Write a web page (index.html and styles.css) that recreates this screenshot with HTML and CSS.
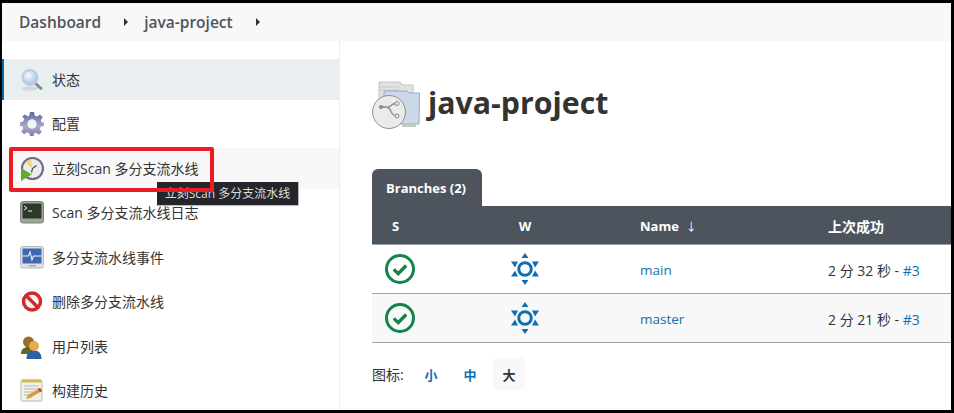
FILE: index.html
```html
<!DOCTYPE html>
<html lang="zh-CN">
<head>
<meta charset="utf-8">
<title>java-project</title>
<link rel="stylesheet" href="styles.css">
</head>
<body>
<svg class="sprite" width="0" height="0">
  <defs>
    <symbol id="ok" viewBox="0 0 30 30">
      <circle cx="15" cy="15" r="13.500" fill="none" stroke="#138347" stroke-width="3"/>
      <path d="M8.800 15.400l4.400 4.300 8-8.200" fill="none" stroke="#138347" stroke-width="3.400"/>
    </symbol>
    <symbol id="sun" viewBox="0 0 28 32">
      <circle cx="14" cy="16" r="6.300" fill="none" stroke="#0f6fae" stroke-width="3"/>
      <path fill="#0f6fae" d="M14 0l3.500 5h-7zM14 32l-3.500-5h7zM0 8.500h7l-3 6zM28 8.500h-7l3 6zM4 17.500l3 6H0zM24 17.500l4 6h-7z"/>
    </symbol>
  </defs>
</svg>
<div class="frame">
  <nav class="crumbs">
    <a class="crumb">Dashboard</a><span class="caret"></span>
    <a class="crumb">java-project</a><span class="caret"></span>
  </nav>
  <div class="layout">
    <aside class="side">
      <a class="item active">
        <svg class="ico" viewBox="0 0 24 24">
          <defs><radialGradient id="lens" cx=".4" cy=".35" r=".8"><stop offset="0" stop-color="#f6fafe"/><stop offset="1" stop-color="#8db6e4"/></radialGradient></defs>
          <ellipse cx="10" cy="20.500" rx="8.500" ry="2" fill="#d3d7d9"/>
          <path d="M14.500 14.500l6.500 6" stroke="#85898c" stroke-width="3" stroke-linecap="round"/>
          <circle cx="10" cy="9.500" r="7.500" fill="url(#lens)" stroke="#c3cacf" stroke-width="1.800"/>
        </svg>
        <span>状态</span>
      </a>
      <a class="item">
        <svg class="ico" viewBox="0 0 24 24">
          <defs><linearGradient id="gear" x1="0" y1="0" x2="0" y2="1"><stop offset="0" stop-color="#59699a"/><stop offset=".6" stop-color="#a8a9cc"/><stop offset="1" stop-color="#7c7fa4"/></linearGradient></defs>
          <path fill="url(#gear)" fill-rule="evenodd" d="M10 0h4l.7 3.500 2.300 1 3-2 2.800 2.800-2 3 1 2.300L24 10.500v3.500l-3.200.7-1 2.300 2 3-2.800 2.800-3-2-2.300 1L14 24h-4l-.7-2.700-2.300-1-3 2-2.800-2.800 2-3-1-2.300L0 14v-3.500l3.200-.9 1-2.300-2-3L5 2.500l3 2 1.300-1zM12 7.500a4.500 4.500 0 1 0 0 9 4.500 4.500 0 0 0 0-9z"/>
          <circle cx="12" cy="12" r="4.500" fill="#f4f4f6"/>
        </svg>
        <span>配置</span>
      </a>
      <a class="item hover">
        <svg class="ico" viewBox="0 0 24 24">
          <circle cx="12.500" cy="11.500" r="10.500" fill="#eeecea" stroke="#726a8a" stroke-width="2.200"/>
          <path d="M12.500 11.500L11 2.500a9 9 0 0 0-6 3z" fill="#ecd987"/>
          <path d="M12.500 11.500l4-3M12.500 11.500l-1 4" stroke="#4b4b4b" stroke-width="1.200"/>
          <path d="M1 11l11 6.500L1 24z" fill="#63ab2c"/>
        </svg>
        <span>立刻Scan 多分支流水线</span>
      </a>
      <a class="item">
        <svg class="ico" viewBox="0 0 24 24">
          <rect x="0.500" y="0.500" width="23" height="21.500" rx="2.500" fill="#9fa39e" stroke="#7d817c"/>
          <rect x="2.500" y="2.500" width="19" height="15" fill="#2b3a28"/>
          <path d="M4 5l3 2-3 2M8 10h4" fill="none" stroke="#e8efe6" stroke-width="1"/>
          <rect x="15" y="19.500" width="2" height="1.500" fill="#8fd14f"/>
        </svg>
        <span>Scan 多分支流水线日志</span>
      </a>
      <a class="item">
        <svg class="ico" viewBox="0 0 24 24">
          <rect x="0.500" y="0.500" width="23" height="21.500" rx="2.500" fill="#dfe2e3" stroke="#b5b9bb"/>
          <rect x="2.500" y="2.500" width="19" height="15" fill="#3c69b3"/>
          <path d="M2.500 10h6l1.500-4 2 8 1.500-4h8" fill="none" stroke="#eef5fb" stroke-width="1.100"/>
          <rect x="9" y="19" width="7" height="1.500" fill="#a5a9ab"/>
        </svg>
        <span>多分支流水线事件</span>
      </a>
      <a class="item">
        <svg class="ico" viewBox="0 0 24 24">
          <circle cx="12" cy="11.500" r="8.500" fill="#f4f1f0" stroke="#cf2a2a" stroke-width="3.400"/>
          <path d="M5.500 5l13 13" stroke="#cf2a2a" stroke-width="3.400"/>
        </svg>
        <span>删除多分支流水线</span>
      </a>
      <a class="item">
        <svg class="ico" viewBox="0 0 24 24">
          <circle cx="8.500" cy="7" r="5.500" fill="#96702a"/>
          <path d="M1 19c0-5 3-7 7.500-7s7 2 7 7z" fill="#5f6a25"/>
          <path d="M6.500 24c0-6 3-8.500 7.500-8.500s7.500 2.500 7.500 8.500z" fill="#2b62a3"/>
          <circle cx="14" cy="11" r="5" fill="#eca94b"/>
        </svg>
        <span>用户列表</span>
      </a>
      <a class="item">
        <svg class="ico" viewBox="0 0 24 24">
          <rect x="1" y="1" width="21" height="21" rx="1" fill="#f2f1ea" stroke="#b9b9ae"/>
          <rect x="2" y="0.500" width="19" height="3" fill="#cdbb55"/>
          <path d="M4 7h15M4 10h15M4 13h10M4 16h6" stroke="#b5b7b5"/>
          <path d="M6 20l2-4 12-7 2 3-12 7z" fill="#d99a3a"/>
          <path d="M18 10l2-1 2 3-2 1z" fill="#c0392b"/>
        </svg>
        <span>构建历史</span>
      </a>
    </aside>
    <main class="main">
      <header class="head">
        <svg class="head-ico" viewBox="0 0 48 48">
          <path d="M7 1h21l2 3h11v38H7z" fill="#e2e2e2" stroke="#c4c4c4"/>
          <path d="M7 6h20M7 9h20" stroke="#c9c9c9"/>
          <path d="M12 10h23l2 2h10.500l-.5 31H12z" fill="#cbd8e8" stroke="#92abc9"/>
          <path d="M30 44.500h14" stroke="#c5c8c5" stroke-width="3"/>
          <circle cx="17" cy="31" r="16.500" fill="#ebebeb" stroke="#8f8f8f"/>
          <path d="M9 26h5c4 0 4 3 5.500 5.500S22 35 25 35M16 26c3 0 3-3.500 8-3.500" fill="none" stroke="#8a8a8a" stroke-width="1.300"/>
          <circle cx="9" cy="26" r="2" fill="#8a8a8a"/>
          <circle cx="25" cy="22.500" r="2" fill="#ebebeb" stroke="#8a8a8a"/>
          <circle cx="25" cy="35" r="2" fill="#ebebeb" stroke="#8a8a8a"/>
        </svg>
        <h1 class="title">java-project</h1>
      </header>
      <div class="tabs"><span class="tab">Branches (2)</span></div>
      <table class="grid">
        <colgroup><col class="c-s"><col class="c-w"><col class="c-n"><col class="c-l"></colgroup>
        <thead>
          <tr><th class="th-s">S</th><th class="th-w">W</th><th>Name&nbsp; <span class="arrow">↓</span></th><th class="th-l">上次成功</th></tr>
        </thead>
        <tbody>
          <tr>
            <td class="td-s"><svg class="stat"><use href="#ok"/></svg></td>
            <td class="td-w"><svg class="wea"><use href="#sun"/></svg></td>
            <td><a class="link">main</a></td>
            <td>2 分 32 秒 - <a class="link build">#3</a></td>
          </tr>
          <tr class="alt">
            <td class="td-s"><svg class="stat"><use href="#ok"/></svg></td>
            <td class="td-w"><svg class="wea"><use href="#sun"/></svg></td>
            <td><a class="link">master</a></td>
            <td>2 分 21 秒 - <a class="link build">#3</a></td>
          </tr>
        </tbody>
      </table>
      <div class="legend">
        <span class="legend-label">图标:</span>
        <a class="size">小</a><a class="size">中</a><a class="size current">大</a>
      </div>
    </main>
  </div>
  <div class="tooltip">立刻Scan 多分支流水线</div>
  <div class="mark"></div>
</div>
</body>
</html>
```
FILE: styles.css
```css
* { box-sizing: border-box; }
html, body { margin: 0; padding: 0; }
body {
  width: 954px;
  height: 413px;
  overflow: hidden;
  font-family: "Open Sans", "Noto Sans CJK SC", sans-serif;
  font-size: 14px;
  color: #333;
  background: #fff;
}
.sprite { position: absolute; }
.frame {
  position: relative;
  width: 954px;
  height: 413px;
  overflow: hidden;
  border-style: solid;
  border-color: #000;
  border-width: 3px 3px 3px 2px;
}
.crumbs {
  height: 38px;
  background: #f8f8f8;
  display: flex;
  align-items: center;
  padding-left: 17px;
}
.crumb {
  font-size: 15.500px;
  font-weight: 600;
  color: #4d545d;
}
.caret {
  width: 0;
  height: 0;
  margin: 0 16px 0 23px;
  border-left: 4px solid #333;
  border-top: 4px solid transparent;
  border-bottom: 4px solid transparent;
}
.layout { display: flex; height: 369px; }
.side {
  width: 338px;
  flex: none;
  padding-top: 18px;
  display: flex;
  flex-direction: column;
  gap: 3.500px;
  border-right: 1px solid #e9eef0;
}
.item {
  height: 41px;
  flex: none;
  display: flex;
  align-items: center;
  gap: 8px;
  padding-left: 16px;
  border-left: 2px solid transparent;
  color: #333;
}
.item span { padding-bottom: 2px; }
.item.active { background: #e9eef0; border-left-color: #0b6aa2; }
.item.hover { background: #f8f8f8; }
.ico { width: 24px; height: 24px; flex: none; }
.main { flex: 1; min-width: 0; padding-left: 32px; }
.head {
  height: 128px;
  display: flex;
  align-items: flex-start;
  gap: 8px;
  padding-top: 40px;
}
.head-ico { width: 48px; height: 48px; flex: none; }
.title {
  margin: 0;
  font-size: 30.300px;
  line-height: 44px;
  font-weight: 700;
  color: #333;
}
.tabs { display: flex; height: 37px; }
.tab {
  width: 110px;
  background: #4d545d;
  color: #fff;
  font-size: 13px;
  font-weight: 700;
  line-height: 38px;
  padding-left: 14px;
  border-radius: 6px 6px 0 0;
}
.grid {
  width: 579px;
  table-layout: fixed;
  border-collapse: separate;
  border-spacing: 0;
}
.c-s { width: 58px; }
.c-w { width: 190px; }
.c-n { width: 188px; }
.grid th {
  height: 39px;
  padding: 1px 0 0 20px;
  background: #4d545d;
  color: #fff;
  font-size: 13px;
  font-weight: 700;
  text-align: left;
  border-bottom: 1px solid #9aa5ad;
}
.grid th.th-w { padding-left: 0; text-align: center; }
.grid th.th-l { font-size: 14px; }
.arrow { font-weight: 400; font-size: 11px; }
.grid td {
  height: 49px;
  padding: 1px 0 0 20px;
  border-bottom: 1px solid #9aa5ad;
  font-size: 14px;
  color: #333;
  white-space: nowrap;
}
.grid td.td-s { padding: 0 0 0 13px; }
.grid td.td-w { padding: 0; text-align: center; }
.alt td { background: #f8f8f8; }
.stat { width: 30px; height: 30px; display: block; }
.wea { width: 28px; height: 32px; display: inline-block; vertical-align: middle; }
.link { color: #0f6fae; font-weight: 500; font-size: 13.500px; }
.link.build { font-size: 14px; font-weight: 400; }
.legend {
  display: flex;
  align-items: center;
  height: 32px;
  margin-top: 15px;
}
.legend-label { width: 43px; font-size: 14px; }
.size {
  width: 32px;
  height: 32px;
  margin-right: 7px;
  display: flex;
  align-items: center;
  justify-content: center;
  font-size: 13px;
  font-weight: 600;
  color: #0f6fae;
  border-radius: 4px;
}
.size.current { background: #f8f8f8; color: #333; }
.tooltip {
  position: absolute;
  left: 155px;
  top: 179px;
  width: 142px;
  height: 24px;
  background: #25262b;
  color: #ddd;
  font-size: 12px;
  line-height: 23px;
  text-align: center;
  border-right: 1px solid #bbb;
  border-bottom: 1px solid #bbb;
}
.mark {
  position: absolute;
  left: 7px;
  top: 144px;
  width: 205px;
  height: 45px;
  border: 4px solid #ed1c24;
  border-radius: 2px;
}
```
